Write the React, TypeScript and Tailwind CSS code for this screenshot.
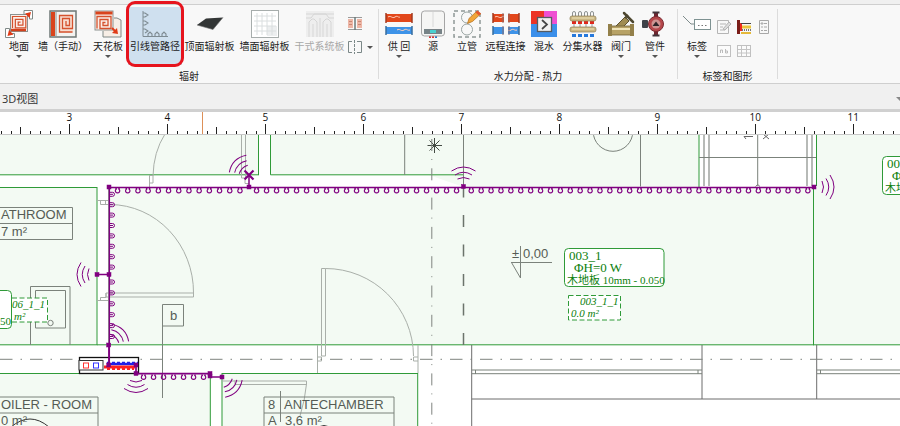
import type { ReactNode } from "react";
import clsx from "clsx";

/* ---------- ribbon icons (28 x 28) ---------- */

function Icon({ children, dim }: { children: ReactNode; dim?: boolean }) {
  return (
    <svg viewBox="0 0 28 28" className={clsx("h-7 w-7 shrink-0", dim && "opacity-50")} fill="none" aria-hidden="true">
      {children}
    </svg>
  );
}

function Coil({ x, y, s = 1 }: { x: number; y: number; s?: number }) {
  return (
    <path
      transform={`translate(${x} ${y}) scale(${s})`}
      d="M0 12V0H14V12H3V3H11V9H6V6H8.5"
      stroke="#d4522e"
      strokeWidth="1.3"
    />
  );
}

const FloorIcon = () => (
  <Icon>
    <rect x="5.5" y="4.5" width="17" height="17" fill="#fbeee8" stroke="#8b9290" />
    <path d="M19 .5H27.500V9H24.500V4.500H19zM.5 18.500H4.500V23.500H9.500V27.500H.5z" fill="#fff" stroke="#7f8886" />
    <Coil x={7.5} y={6.5} s={0.95} />
    <path d="M6 20H21" stroke="#d4411c" strokeWidth="2.500" />
    <path d="M26 2l-6 1.500 4.500 4.500zM2.500 26l1.500-6 4.500 4.500z" fill="#e03a16" />
  </Icon>
);

const WallIcon = () => (
  <Icon>
    <rect x="1" y="1" width="26" height="26" fill="#f3f3f1" stroke="#6e7775" strokeWidth="1.5" />
    <rect x="2" y="2" width="4" height="24" fill="#d9441d" />
    <path d="M7 2v24" stroke="#8b9290" />
    <rect x="10" y="5.500" width="14" height="17" fill="#f7ddd0" />
    <path d="M23.500 22H10.500V5.500H23.500V18.500H13.500V8.500H20.500V15.500H17V11" stroke="#d4522e" strokeWidth="1.300" />
  </Icon>
);

const CeilingIcon = () => (
  <Icon>
    <path d="M20 8h3l4 2v17H9v-6" fill="#f7eee6" stroke="#7f8886" />
    <rect x="1" y="1" width="18" height="19" fill="#fbeee8" stroke="#8b9290" />
    <path d="M1.500 3H18.500" stroke="#d9441d" strokeWidth="3" />
    <Coil x={3} y={6.500} />
    <path d="M18 18l4 4" stroke="#e03a16" strokeWidth="2" />
    <path d="M24 24l-6-1 5-5z" fill="#e03a16" />
  </Icon>
);

const LeadPipeIcon = () => (
  <Icon>
    <path d="M2 1V26.500H27" stroke="#7e8b92" />
    <path
      d="M2 3h2l3 2-3 2H2M2 11h2l3 2-3 2H2M2 19h2l3 2-3 2M7 26v-2l2-2 2 2v2M14 26v-2l2-2 2 2v2M21 26v-2l2-2 2 2v2"
      stroke="#7e8b92"
      strokeWidth="1.100"
    />
  </Icon>
);

const PanelIcon = () => (
  <Icon>
    <path d="M10 8.500L27 7.500 17 19.500 1 15z" fill="#333636" />
    <path d="M1 15l16 4.500L27 7.500" stroke="#6c6c6c" strokeWidth=".6" />
  </Icon>
);

const WallPanelIcon = () => (
  <Icon>
    <rect x=".5" y=".5" width="27" height="27" fill="#fff" stroke="#a7adac" />
    <path d="M6 3v22M11 3v22M16 3v22M21 3v22M3 6h22M3 11h22M3 16h22M3 21h22" stroke="#dadedf" />
    <path d="M16 16h10v10H16z" fill="#d9dddf" opacity=".5" />
  </Icon>
);

const DryIcon = () => (
  <Icon dim>
    <rect x="0" y="1" width="28" height="26" fill="#e6e6e6" />
    <path d="M0 4h28M0 8h5l3-4h12l3 4h5" stroke="#b4b4b4" />
    <path d="M3 27V12l3-3h2l3 3v15M17 27V12l3-3h2l3 3v15M14 27V8M7 27V14M21 27V14" stroke="#b4b4b4" />
  </Icon>
);

function Pipes({ split }: { split?: boolean }) {
  return (
    <Icon>
      <rect x="1" y="4" width="26" height="8" fill="#e2471b" />
      <rect x="1" y="17" width="26" height="7" fill="#3e93e8" />
      <path d="M1 3v10M27 3v10" stroke="#a33b20" strokeWidth="1.500" />
      <path d="M1 16v9M27 16v9" stroke="#396e9d" strokeWidth="1.500" />
      <path d="M3 7c3-2 4 2 7 0s3 1 5 0M12 20c3-2 4 2 7 0s3 1 6 0" stroke="#ffd2c0" />
      {split && (
        <>
          <path d="M12 2h4v23h-4z" fill="#f8f8f8" />
          <path d="M11 3v10M17 3v10M11 16v9M17 16v9" stroke="#8a6a6a" />
        </>
      )}
    </Icon>
  );
}

const BoilerIcon = () => (
  <Icon>
    <path d="M11 26v2M14 26v2" stroke="#d33" strokeWidth="2" />
    <path d="M17 26v2" stroke="#27c" strokeWidth="2" />
    <rect x="2.500" y="1" width="23" height="25" rx="3" fill="#f5f5f4" stroke="#a5a5a5" />
    <path d="M14 2v15" stroke="#d8d8d8" />
    <rect x="5" y="19" width="18" height="5" fill="#778387" />
    <rect x="11" y="20" width="6" height="3" fill="#49d0d0" />
  </Icon>
);

const RiserIcon = () => (
  <Icon>
    <rect x="1" y="1" width="26" height="26" stroke="#8e9896" strokeWidth="1.500" strokeDasharray="4 3" />
    <circle cx="14" cy="7.500" r="5.500" stroke="#9aa5a3" />
    <circle cx="14" cy="19.500" r="5.500" stroke="#9aa5a3" />
    <path d="M14.500 13.500l1.500-5L24 1l3.500 3L19.500 11.500z" fill="#f0a63a" stroke="#b06a1a" strokeWidth=".7" />
    <path d="M22.500 2.500L24.500.500 28 3.500 26 5.500z" fill="#e4572e" />
  </Icon>
);

const MixIcon = () => (
  <Icon>
    <rect x="1" y="1" width="26" height="26" fill="#3b8fea" />
    <path d="M1 1h13v13H1z" fill="#ec3325" />
    <path d="M14 1h13v13H14z" fill="#ef4fd2" />
    <rect x="7.500" y="7.500" width="14" height="14" fill="#f1f1f1" stroke="#555b60" strokeWidth="1.300" />
    <path d="M12 10l5 4.500-5 4.500" stroke="#444" strokeWidth="1.700" />
  </Icon>
);

const ManifoldIcon = () => (
  <Icon>
    {[3, 9, 15, 21].map((x) => (
      <g key={x}>
        <path d={`M${x + 0.5} 7V3a1.500 1.500 0 0 1 3 0v4`} stroke="#8e9292" />
        <rect x={x} y="11" width="4" height="3" fill="#e0271c" />
        <rect x={x + 1} y="14" width="2" height="3" fill="#c9c9c9" />
        <rect x={x} y="24" width="4" height="3" fill="#2679dc" />
      </g>
    ))}
    <rect x="1" y="6" width="26" height="5" rx="2" fill="#cbb784" stroke="#8d7c54" strokeWidth=".7" />
    <rect x="1" y="17" width="26" height="5" rx="2" fill="#cbb784" stroke="#8d7c54" strokeWidth=".7" />
    <path d="M3 8h22M3 19h22" stroke="#efe3b8" />
  </Icon>
);

const ValveIcon = () => (
  <Icon>
    <path d="M8 17L18 7l4 4-7 7z" fill="#a08c52" stroke="#5d5130" />
    <path d="M17 3l9 9" stroke="#4d4730" strokeWidth="2.500" strokeLinecap="round" />
    <path d="M18 8l3-3" stroke="#4d4730" strokeWidth="2" />
    <rect x="2" y="16" width="24" height="9" fill="#b7a266" stroke="#6e6038" strokeWidth=".8" />
    <rect x="1" y="14" width="4" height="12" fill="#93804a" />
    <rect x="23" y="14" width="4" height="12" fill="#93804a" />
    <path d="M5 19h18" stroke="#efe3b8" strokeWidth="2" />
  </Icon>
);

const PumpIcon = () => (
  <Icon>
    <path d="M15 2v24" stroke="#6d2630" strokeWidth="4" />
    <path d="M11.500 2.500h7M11.500 25.500h7" stroke="#42343a" strokeWidth="2" />
    <rect x="1" y="10" width="6" height="8" rx="1" fill="#3e4248" />
    <circle cx="15" cy="14" r="7.500" fill="#b6474b" stroke="#7b2a31" />
    <circle cx="15" cy="14" r="4.500" fill="#cf9492" />
    <path d="M11.500 16l3.500-4.500 3.500 4.500z" fill="#2e2528" />
  </Icon>
);

const TagIcon = () => (
  <Icon>
    <path d="M0 6l8 8h3" stroke="#7e8b8b" />
    <rect x="11.500" y="9.500" width="16" height="10" fill="#fff" stroke="#7e9292" />
    <path d="M15 15.500h1.500M18.500 15.500H20M22 15.500h1.500" stroke="#777" />
  </Icon>
);

/* ---------- ribbon ---------- */

type Tool = { label: string; icon: ReactNode; width: string; menu?: boolean; active?: boolean; disabled?: boolean };

const radiant: Tool[] = [
  { label: "地面", icon: <FloorIcon />, width: "w-[38px]", menu: true },
  { label: "墙（手动）", icon: <WallIcon />, width: "w-[50px]" },
  { label: "天花板", icon: <CeilingIcon />, width: "w-10", menu: true },
  { label: "引线管路径", icon: <LeadPipeIcon />, width: "w-[54px]", active: true },
  { label: "顶面辐射板", icon: <PanelIcon />, width: "w-[55px]" },
  { label: "墙面辐射板", icon: <WallPanelIcon />, width: "w-[55px]" },
  { label: "干式系统板", icon: <DryIcon />, width: "w-[55px]", disabled: true },
];

const hydraulic: Tool[] = [
  { label: "供 回", icon: <Pipes />, width: "w-8", menu: true },
  { label: "源", icon: <BoilerIcon />, width: "w-9" },
  { label: "立管", icon: <RiserIcon />, width: "w-8" },
  { label: "远程连接", icon: <Pipes split />, width: "w-[45px]" },
  { label: "混水", icon: <MixIcon />, width: "w-8" },
  { label: "分集水器", icon: <ManifoldIcon />, width: "w-[45px]" },
  { label: "阀门", icon: <ValveIcon />, width: "w-8", menu: true },
  { label: "管件", icon: <PumpIcon />, width: "w-9", menu: true },
];

function Caret() {
  return <span className="block h-0 w-0 border-x-3 border-t-3 border-x-transparent border-t-[#555]" />;
}

function ToolButton({ label, icon, width, menu, active, disabled }: Tool) {
  return (
    <button
      type="button"
      disabled={disabled}
      aria-pressed={active}
      className={clsx(
        "relative flex h-[58px] shrink-0 flex-col items-center whitespace-nowrap pt-[3px] text-[10px] leading-[14px]",
        width,
        active && "bg-[#cfe0ef]",
        disabled ? "text-[#a8a8a8]" : "text-[#222]",
      )}
    >
      {icon}
      <span className="mt-px mb-0.5">{label}</span>
      {menu && <Caret />}
      {active && <span className="absolute -inset-x-0.5 -top-1.5 -bottom-0.5 rounded-[9px] border-[3px] border-[#e6141e]" />}
    </button>
  );
}

function Group({ title, children, className }: { title: string; children: ReactNode; className?: string }) {
  return (
    <section className={clsx("flex shrink-0 flex-col pt-0.5", className)}>
      <div className="flex">{children}</div>
      <h2 className="mt-1 text-center text-[10px] leading-[14px] text-[#222]">{title}</h2>
    </section>
  );
}

function Divider() {
  return <div className="my-1 w-px shrink-0 bg-[#dcdcdc]" />;
}

function SmallButton({ label, children }: { label: string; children: ReactNode }) {
  return (
    <button type="button" aria-label={label} className="flex h-4 w-4 items-center justify-center">
      <svg viewBox="0 0 16 16" className="h-4 w-4" fill="none">
        {children}
      </svg>
    </button>
  );
}

function Ribbon() {
  return (
    <div className="flex border-y border-[#cfcfcf] bg-[#f8f8f8]">
      <Group title="辐射">
        {radiant.map((t) => (
          <ToolButton key={t.label} {...t} />
        ))}
        <div className="flex w-[31px] flex-col gap-2 pt-2">
          <SmallButton label="collector pair">
            <path d="M1 2.500h14M1 14.500h14" stroke="#9b9b9b" />
            <rect x="1" y="4" width="5" height="9" fill="#edb6a6" />
            <rect x="10" y="4" width="5" height="9" fill="#edb6a6" />
            <path d="M2 6.500h3M11 6.500h3M2 9.500h3M11 9.500h3" stroke="#c98773" />
            <path d="M8 2v13" stroke="#6c7a7a" strokeWidth="1.500" />
          </SmallButton>
          <div className="flex items-center gap-1">
            <SmallButton label="split panel">
              <path d="M5 2.500H1.500v11H5M10 2.500h4.500v11H10" stroke="#7b8888" />
              <path d="M7.500 1v14" stroke="#7b8888" strokeDasharray="3 1" />
            </SmallButton>
            <Caret />
          </div>
        </div>
      </Group>
      <Divider />
      <Group title="水力分配 - 热力" className="px-1">
        {hydraulic.map((t) => (
          <ToolButton key={t.label} {...t} />
        ))}
      </Group>
      <Divider />
      <Group title="标签和图形" className="w-[99px]">
        <ToolButton label="标签" icon={<TagIcon />} width="w-[38px]" menu />
        <div className="grid grid-cols-3 content-start gap-x-1 gap-y-2 pt-3">
          <SmallButton label="edit note">
            <path d="M1.500 1.500h11v13h-11zM4 5h6M4 8h3M4 11h5" stroke="#b5b5b5" />
            <path d="M7 10l6-7 2 2-6 6z" fill="#ddd" stroke="#b5b5b5" />
          </SmallButton>
          <SmallButton label="legend">
            <path d="M1 1h3v14H1z" fill="#7a1d18" />
            <path d="M4 4h2v8H4z" fill="#ef2a20" />
            <path d="M5 4.500h10" stroke="#444" />
            <path d="M6 8h9" stroke="#ecc63c" strokeWidth="3" />
            <path d="M6 11h9" stroke="#777" strokeDasharray="1 1" strokeWidth="2" />
            <path d="M5 14h10" stroke="#e5b93a" strokeWidth="2" />
          </SmallButton>
          <SmallButton label="list">
            <path d="M3.500 1.500h9v13h-9z" stroke="#a8a8a8" />
            <path d="M5 4h2v1H5zM8 4.500h3M5 8h2M8 8h3M5 11.500h2M8 11.500h3" stroke="#a8a8a8" />
          </SmallButton>
          <SmallButton label="text field">
            <rect x="1.500" y="2.500" width="13" height="11" fill="#fbfbfb" stroke="#c0c0c0" />
            <path d="M4.500 10V7h2v3M9.500 6v4h2V8h-2" stroke="#bbb" />
          </SmallButton>
          <SmallButton label="table">
            <rect x="1.500" y="2.500" width="13" height="11" fill="#fbfbfb" stroke="#c0c0c0" />
            <path d="M5.500 3v10M10.500 3v10M2 6.500h12M2 10h12" stroke="#c4c4c4" />
          </SmallButton>
        </div>
      </Group>
      <Divider />
    </div>
  );
}

/* ---------- ruler ---------- */

const UNIT = 98;
const ORIGIN = 69.3 - 3 * UNIT;

function Ruler() {
  const ticks = Array.from({ length: 220 }, (_, i) => i + 23);
  return (
    <svg className="block h-[23px] w-full overflow-visible bg-white" aria-label="ruler">
      {ticks.map((n) => {
        const x = Math.round(ORIGIN + (n * UNIT) / 10) + 0.5;
        const len = n % 10 === 0 ? 10 : n % 5 === 0 ? 7 : 3;
        return <path key={n} d={`M${x} 22V${22 - len}`} stroke="#222" />;
      })}
      {ticks
        .filter((n) => n % 10 === 0)
        .map((n) => (
          <text key={n} x={ORIGIN + (n * UNIT) / 10} y="9" textAnchor="middle" fontSize="10" fill="#111">
            {n / 10}
          </text>
        ))}
      <path d="M202.500 0V22" stroke="#dd9058" />
      <path d="M0 22.500H3000" stroke="#c8c8c8" />
    </svg>
  );
}

/* ---------- floor plan ---------- */

const PIPE = "#800080";
const ROOM = "#2f9a38";

function range(start: number, end: number, step: number) {
  const out: number[] = [];
  for (let v = start; v <= end; v += step) out.push(v);
  return out;
}

function Hooks({ xs, y }: { xs: number[]; y: number }) {
  return (
    <>
      {xs.map((x) => (
        <path key={x} d={`M${x - 2} ${y + 0.7}h1.500a2.200 2.200 0 1 0 1.500 0h1.500`} strokeWidth="1.200" />
      ))}
    </>
  );
}

function SideHooks({ ys, x }: { ys: number[]; x: number }) {
  return (
    <>
      {ys.map((y) => (
        <path key={y} d={`M${x} ${y - 2}h2.500a2 2 0 0 1 0 4H${x}M${x} ${y}h3`} strokeWidth="1" />
      ))}
    </>
  );
}

function Waves({ x, y, turn = 0 }: { x: number; y: number; turn?: number }) {
  return (
    <path
      transform={`translate(${x} ${y}) rotate(${turn})`}
      d="M-12 4Q0 -4 12 4M-8.500 8Q0 2.500 8.500 8M-6 12Q0 9 6 12"
      strokeWidth="1"
    />
  );
}

function Node({ x, y }: { x: number; y: number }) {
  return <rect x={x - 2} y={y - 2} width="4" height="4" fill={PIPE} stroke={PIPE} strokeWidth=".5" />;
}

function Rooms() {
  return (
    <g fill="#f3faf3" stroke={ROOM}>
      <rect x="-10" y="120" width="268.500" height="54.800" />
      <path d="M463.500 187V174.800H270.500V120H699V187z" stroke="none" />
      <path d="M463.500 187V174.800H270.500V120M699 120V187" />
      <path d="M817 120V187H813.500V345H3000V120z" stroke="none" />
      <rect x="-10" y="187.500" width="107" height="157.300" />
      <rect x="109" y="187.500" width="704.500" height="157.300" />
      <path d="M816.500 120V186M813 344.800H3000" />
      <path d="M97 344.800H109" />
      <rect x="-10" y="373.500" width="220.300" height="100" />
      <rect x="222" y="373.500" width="195.700" height="100" />
    </g>
  );
}

function Architecture() {
  return (
    <g stroke="#7b827b">
      <g stroke="#a9afa9">
        <path d="M165 134Q153.500 152 153 176M149.500 175V187M149.500 175.500H153V183H149.500" />
        <path d="M241.500 134V178H245.500V134M245 180V183.500H249" />
        <path d="M97 200.500H109M100.500 201V204.500H109M105.500 201V204.500" />
        <path d="M110 204.500A84 88 0 0 1 193.500 293M106 293H193.500V297H106z" />
        <path d="M97 300.500H108M100.500 300V297.500H106V293" />
        <path d="M321.500 356V268.500H325.500V356zM325.500 268.500A88 88 0 0 1 413.500 356" />
        <path d="M317.500 345V373M418 345V373M317.500 357H321.500V361H317.500M418 357H413.500V361H418" />
        <path d="M222 381H306.500V384.500H235M306.500 384Q305 400 300 416M235 380V384" />
      </g>
      <path d="M30.500 345V286.500H70V345M35.500 290.500H65.500V328H35.500z" />
      <circle cx="50.500" cy="323" r="2.700" />
      <path d="M162.500 398V304.500H183.500V326H162.500" />
      <path d="M-5 207.500H72.500V239.500H-5M-5 223.500H72.500" />
      <path d="M-5 397H98V440M-5 413H98" />
      <path d="M264 440V397H394V440M264 413H394M280.500 391V422" />
      <path d="M11 427Q30 411 49 427M318 427Q324 424 330 427" stroke="#333" />
      <path d="M404.700 134V175M463.500 134V187M640.500 134V186.500" />
      <circle cx="613" cy="131.500" r="19.800" />
      <path d="M427.500 145.500H442M434.500 138V153M429.500 140.500L439.500 150.500M439.500 140.500L429.500 150.500" stroke="#444b44" />
      {/* shaft */}
      <path d="M704 134V186M709 134V186M807 134V186M812 134V186" stroke="#a0a4a0" strokeWidth="1.500" />
      <path d="M757.700 134V186M699 157.500H816M755.500 186.500L757.700 184.500 760 186.500" />
      <path d="M744 136.500H753M744 136.500L746 139M763 134L769 139M769 134L763 139" stroke="#666" />
      {/* lower wall */}
      <path d="M471.700 345V440M702 345V399M816.700 345V399M471.700 399H3000" stroke="#6d6d6d" />
      <path d="M471.700 370H702M471.700 373.700H702M817 370H3000M817 373.700H3000" />
      <path d="M475.500 370V374M698 370V374M820.500 370V374" />
      <path d="M463.500 185.500V345" stroke="#6b736b" strokeWidth="1.500" strokeDasharray="12 17.500" />
      <path d="M431.800 139V426" stroke="#7f847f" strokeDasharray="12 8 1 8.300" />
      <path d="M0 359.300H3000" stroke="#7f847f" strokeDasharray="12.500 8 1.500 8" />
      <path d="M511 262.500H552M520.500 246V278L511.500 262.500" />
    </g>
  );
}

function RoomLabels() {
  return (
    <g fill="#555c55" fontFamily="'Liberation Sans', sans-serif" fontSize="13">
      <text x="1" y="219">ATHROOM</text>
      <text x="1" y="236">7 m²</text>
      <text x="1" y="409">OILER - ROOM</text>
      <text x="1" y="425">0 m²</text>
      <text x="268" y="409">8</text>
      <text x="284" y="409">ANTECHAMBER</text>
      <text x="268" y="425">A</text>
      <text x="285" y="425">3,6 m²</text>
      <text x="170" y="320">b</text>
      <text x="512" y="258">±</text>
      <text x="523" y="258">0,00</text>
    </g>
  );
}

function CircuitTags() {
  return (
    <g fill="#0c800c" fontFamily="'Liberation Serif', 'Noto Sans CJK SC', serif">
      <g fill="#fff" stroke={ROOM}>
        <rect x="564.500" y="248.500" width="99.500" height="38" rx="4" />
        <rect x="882.500" y="156.500" width="99.500" height="38" rx="4" />
        <rect x="-88" y="290.500" width="99.500" height="38" rx="4" />
        <path d="M568.500 295.500H620.500V320H568.500zM12 298H47.500V322H12" strokeDasharray="5 2.500" />
      </g>
      <text x="569" y="260" fontSize="13">003_1</text>
      <text x="574" y="272" fontSize="13">ΦH=0 W</text>
      <text x="567" y="284" fontSize="11">木地板 10mm - 0.050</text>
      <text x="887" y="168" fontSize="13">003_1</text>
      <text x="892" y="180" fontSize="13">ΦH=0 W</text>
      <text x="885" y="192" fontSize="11">木地板 10mm - 0.050</text>
      <text x="0" y="325" fontSize="11">50</text>
      <g fontStyle="italic" fontSize="11">
        <text x="580" y="305">003_1_1</text>
        <text x="571" y="317">0.0 m²</text>
        <text x="12" y="308">06_1_1</text>
        <text x="14" y="320">m²</text>
      </g>
    </g>
  );
}

function Collector() {
  return (
    <g>
      <rect x="79.500" y="357.500" width="59" height="16" fill="#fff" stroke="#111" strokeWidth="1.300" />
      <rect x="79" y="360.500" width="24" height="9.500" fill="#fff" stroke="#333" />
      <rect x="83.500" y="363" width="5" height="5" stroke="#f33" />
      <rect x="93.500" y="363" width="5" height="5" stroke="#33f" />
      <path d="M107 364H138" stroke="#2020e8" strokeWidth="2.500" />
      <path d="M107 362.500H138" stroke="#2020e8" strokeWidth="1.500" strokeDasharray="3 2" />
      <path d="M104 367H135" stroke="#f22" strokeWidth="3" />
      <path d="M107 369H134" stroke="#f22" strokeWidth="2" strokeDasharray="3 2" />
    </g>
  );
}

function LeadPipes() {
  return (
    <g stroke={PIPE}>
      <path d="M109.300 365V187.500H814M97 274.500H109M249 175V187" strokeWidth="1.500" />
      <path d="M109 345V365M136 365V373.700H210V377H222" strokeWidth="1.700" />
      <Hooks xs={range(117.3, 241, 10.2)} y={188} />
      <Hooks xs={range(256.3, 457, 10)} y={188} />
      <Hooks xs={range(471, 808, 9.9)} y={188} />
      <Hooks xs={range(143.3, 204, 10)} y={374.5} />
      <SideHooks ys={range(194.3, 268, 10.4)} x={110} />
      <SideHooks ys={range(282, 338, 10.9)} x={110} />
      <path d="M244.500 170.500L253.500 179.500M253.500 170.500L244.500 179.500" strokeWidth="2.200" />
      <Waves x={235} y={161} turn={-45} />
      <Waves x={463.5} y={167} />
      <Waves x={834} y={187} turn={90} />
      <Waves x={77} y={274.5} turn={-90} />
      <Waves x={123} y={330} turn={45} />
      <Waves x={136} y={392.5} turn={180} />
      <Waves x={236.5} y={391.5} turn={135} />
      <Node x={109} y={187} />
      <Node x={249} y={187} />
      <Node x={463.5} y={186.5} />
      <Node x={814} y={187} />
      <Node x={97} y={274.5} />
      <Node x={109} y={274.5} />
      <Node x={108.7} y={345} />
      <Node x={108.7} y={365} />
      <Node x={136} y={365} />
      <Node x={136} y={373.5} />
      <Node x={210} y={373.5} />
      <Node x={210} y={376} />
      <Node x={222} y={377} />
    </g>
  );
}

function FloorPlan() {
  return (
    <svg className="block min-h-[291px] w-full flex-1 bg-white" fill="none" aria-label="floor plan">
      <g transform="translate(0 -135)">
        <Rooms />
        <Architecture />
        <RoomLabels />
        <CircuitTags />
        <Collector />
        <LeadPipes />
      </g>
    </svg>
  );
}

export default function App() {
  return (
    <div className="flex min-h-screen flex-col overflow-hidden bg-[#f0f0f0] pt-1 font-['Open_Sans','Noto_Sans_CJK_SC',sans-serif]">
      <Ribbon />
      <div className="flex h-[25px] items-center justify-between pl-0.5 text-[11px] leading-4 text-[#333]">
        <span className="pt-1">3D视图</span>
        <button type="button" aria-label="view list" className="-mr-1 pt-1">
          <span className="block border-x-4 border-t-4 border-x-transparent border-t-[#888]" />
        </button>
      </div>
      <div className="h-[3px] bg-[#d0d0d0]" />
      <Ruler />
      <FloorPlan />
    </div>
  );
}
